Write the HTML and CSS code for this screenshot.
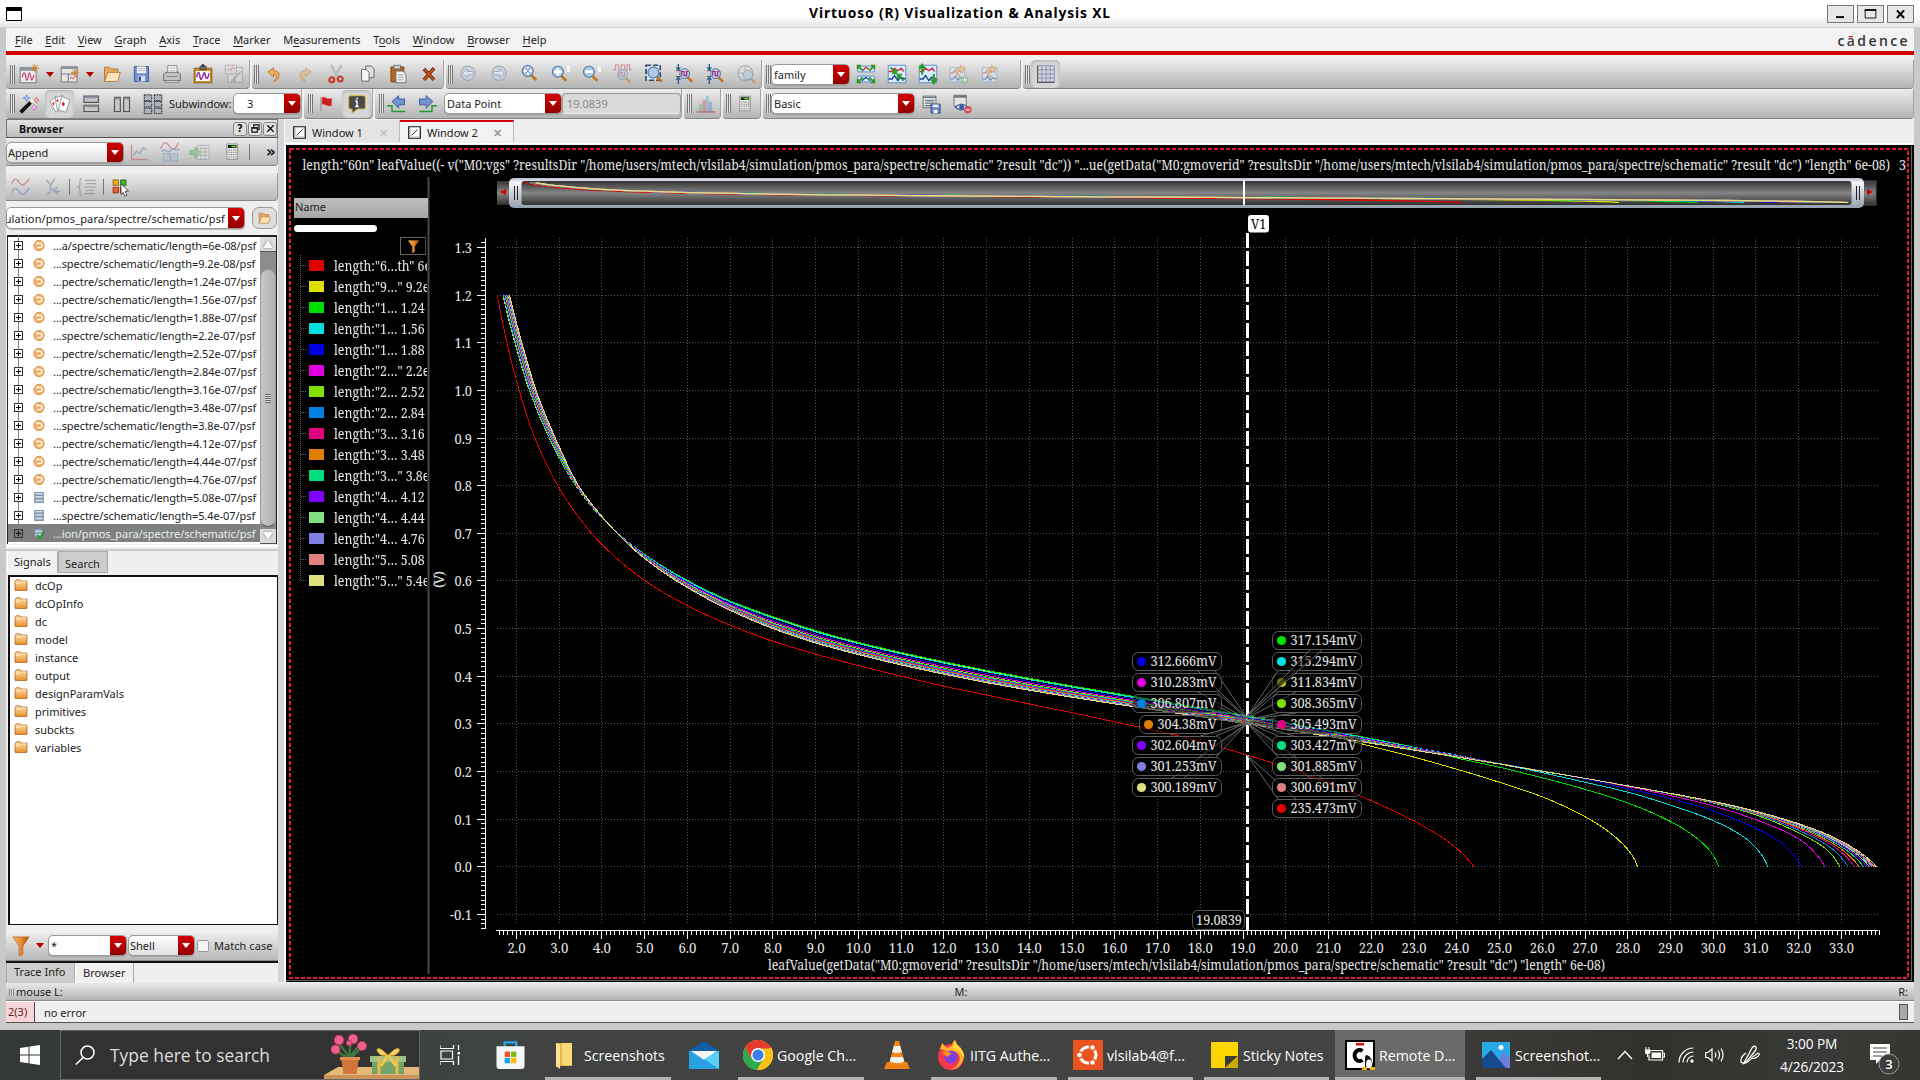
FILE: index.html
```html
<!DOCTYPE html>
<html lang="en">
<head>
<meta charset="utf-8">
<title>Virtuoso (R) Visualization &amp; Analysis XL</title>
<link rel="stylesheet" href="styles.css">
</head>
<body>
<svg class="defs" width="0" height="0">
  <defs>
    <linearGradient id="gOrange" x1="0" y1="0" x2="0" y2="1"><stop offset="0" stop-color="#ffe0b0"/><stop offset="1" stop-color="#e8912c"/></linearGradient>
    <linearGradient id="gFunnel" x1="0" y1="0" x2="1" y2="0"><stop offset="0" stop-color="#ffb870"/><stop offset=".5" stop-color="#e88a30"/><stop offset="1" stop-color="#a85210"/></linearGradient>
    <linearGradient id="gBar" x1="0" y1="0" x2="0" y2="1"><stop offset="0" stop-color="#333"/><stop offset=".5" stop-color="#858585"/><stop offset="1" stop-color="#303030"/></linearGradient>
    <linearGradient id="gFrame" x1="0" y1="0" x2="0" y2="1"><stop offset="0" stop-color="#b8bcc8"/><stop offset=".15" stop-color="#f4f5fa"/><stop offset="1" stop-color="#939fac"/></linearGradient>
    <symbol id="folder" viewBox="0 0 16 14"><path d="M1 3V13.3H15V2.5H8L7 1H2.500Z" fill="url(#gOrange)" stroke="#b5661a"/><path d="M2 5H7L8.500 3.500H14" stroke="#fff0d8" fill="none"/></symbol>
    <symbol id="openfolder" viewBox="0 0 24 24"><path d="M3 21V4H9L11 6H19V10" fill="#e9a860" stroke="#b5702c"/><path d="M3 21L7 10H22L19 21Z" fill="#fbe3b8" stroke="#b5702c"/></symbol>
    <symbol id="orb" viewBox="0 0 14 14"><circle cx="7" cy="7" r="6" fill="#f3b069" stroke="#d98a3c"/><path d="M5 4.500H8A2.300 2.300 0 0 1 8 9.500H5" fill="none" stroke="#fff" stroke-width="1.400"/><path d="M3 4.500L5.500 2.800V6.200Z" fill="#fff"/></symbol>
    <symbol id="db" viewBox="0 0 14 14"><path d="M2 1H12V13H2Z" fill="#a8bccf" stroke="#6d8298"/><path d="M3 2.500H11M3 6H11M3 10H11" stroke="#e4edf5"/><path d="M2 4.500H12M2 8.500H12" stroke="#6d8298"/></symbol>
    <symbol id="dbok" viewBox="0 0 14 14"><path d="M2 1H11V12H2Z" fill="#93a5b5" stroke="#66798c"/><path d="M2 4.500H11M2 8.500H11" stroke="#dbe5ee"/><path d="M5 9L8 12.500L13.500 4.500" fill="none" stroke="#249a34" stroke-width="2.400"/></symbol>
    <symbol id="funnel" viewBox="0 0 20 22"><path d="M1 1H19L12 11V20L8 22V11Z" fill="url(#gFunnel)" stroke="#b06420" stroke-width=".8"/></symbol>
    <symbol id="calc" viewBox="0 0 24 24"><path d="M4.500 1.500H19.500V22.500H4.500Z" fill="#e4e6e2" stroke="#777"/><path d="M6 3H18V7H6Z" fill="#222"/><path d="M11 4H17V6H11Z" fill="#4ee020"/><path d="M7 10H18M7 13H18M7 16H18M7 19.500H18" stroke="#666" stroke-width="1.300" stroke-dasharray="1.500 1.600"/></symbol>
    <symbol id="wavewin" viewBox="0 0 24 24"><path d="M1.500 4.500H20.500V22.500H1.500Z" fill="#ececec" stroke="#666"/><path d="M1 4H21V8H1Z" fill="#8a959e"/><path d="M4 16C5 9 7 9 8 15S10 21 11 15S13 9 14 15S16 20 18 13" fill="none" stroke="#c2486a" stroke-width="1.500"/></symbol>
    <symbol id="spark" viewBox="0 0 10 10"><path d="M5 0V10M0 5H10M1.500 1.500L8.500 8.500M8.500 1.500L1.500 8.500" stroke="#d9781c" stroke-width="1.100"/></symbol>
    <symbol id="mag" viewBox="0 0 24 24"><path d="M13 14L21 22" stroke="#c8701c" stroke-width="3.600"/><circle cx="9.500" cy="9.500" r="7.500" fill="#aecbe8" stroke="#52779c" stroke-width="1.500"/></symbol>
    <symbol id="plotwin" viewBox="0 0 14 14"><path d="M.8.800H13.200V13.200H.8Z" fill="#fff" stroke="#111" stroke-width="1.300"/><path d="M4 10L10 4" stroke="#111"/><path d="M2.800 2V11.500H12" fill="none" stroke="#aaa" stroke-width=".6"/></symbol>
    <symbol id="undo" viewBox="0 0 24 24"><path d="M3 9L11 3V7C18 7 21 12 18 17C17 20 14 22 11 22C16 18 17 12 11 12V16Z" fill="#f3ac5a" stroke="#b76618"/></symbol>
    <symbol id="traceplot" viewBox="0 0 24 24"><path d="M1.500 1.500H22.500V22.500H1.500Z" fill="#d9ecff" stroke="#4a83bf"/><path d="M2 9H6L9 5L13 8L17 5L20 9" fill="none" stroke="#d42a35" stroke-width="1.600"/><path d="M2 18H6L9 14L13 20L16 16L22 18" fill="none" stroke="#16448c" stroke-width="1.600"/></symbol>
  </defs>
</svg>

<div class="desktop">
  <header class="titlebar">
    <svg class="sysicon" viewBox="0 0 16 14"><path d="M.5.500H15.500V13.500H.5Z" fill="#fff" stroke="#000"/><path d="M0 0H16V4H0Z"/></svg>
    <h1>Virtuoso (R) Visualization &amp; Analysis XL</h1>
    <div class="winbtns">
      <span><svg viewBox="0 0 26 18"><path d="M8 12.500H17" stroke="#000" stroke-width="2.200"/></svg></span>
      <span><svg viewBox="0 0 26 18"><path d="M7 4.500H19V13.500H7Z" fill="none" stroke="#000" /><path d="M6.500 4.500H19.500" stroke="#000" stroke-width="2"/></svg></span>
      <span><svg viewBox="0 0 26 18"><path d="M9 5L17 13.500M17 5L9 13.500" stroke="#000" stroke-width="2.200"/></svg></span>
    </div>
  </header>

  <div class="app">
    <nav class="menubar">
      <span><u>F</u>ile</span><span><u>E</u>dit</span><span><u>V</u>iew</span><span><u>G</u>raph</span><span><u>A</u>xis</span><span><u>T</u>race</span><span><u>M</u>arker</span><span>M<u>e</u>asurements</span><span>T<u>o</u>ols</span><span><u>W</u>indow</span><span><u>B</u>rowser</span><span><u>H</u>elp</span>
      <b class="brand">c<span>ā</span>dence</b>
    </nav>

    <div class="toolbar">
      <div class="grp ga">
        <i class="grip"></i>
        <span class="ic w28"><svg viewBox="0 0 24 24"><use href="#wavewin"/><use href="#spark" x="14" y="0" width="10" height="10"/></svg></span>
        <span class="tri w14"></span>
        <span class="ic w25"><svg viewBox="0 0 24 24"><path d="M1.500 3.500H20.500V21.500H1.500ZM1.500 12H20M10 12V21" fill="#e6e6e6" stroke="#666"/><path d="M1 3H21V6H1Z" fill="#8a959e"/><path d="M12 18C14 12 15 22 17 16S19 18 20 15" fill="none" stroke="#c2284a"/><use href="#spark" x="13" y="5" width="10" height="10"/></svg></span>
        <span class="tri w16"></span>
        <span class="ic w27"><svg viewBox="0 0 24 24"><use href="#openfolder"/></svg></span>
        <span class="ic"><svg viewBox="0 0 24 24"><path d="M4 3H21V21H4Z" fill="#6d8fd0" stroke="#2f4f96"/><path d="M7 3H18V11H7Z" fill="#f4f4f4"/><path d="M8 5.500H17M8 8H17" stroke="#aaa"/><path d="M8 14H17V21H8Z" fill="#dde"/><path d="M9 15H12V20H9Z" fill="#2f4f96"/></svg></span>
        <span class="ic"><svg viewBox="0 0 24 24"><path d="M7 11V2H18V11" fill="#fff" stroke="#777"/><path d="M9 5H16M9 8H16" stroke="#999"/><path d="M2 12L5 10H20L22 12V20H2Z" fill="#c4c4c0" stroke="#666"/><path d="M4 20H20V22H4ZM5 15H19" fill="#eee" stroke="#777"/></svg></span>
        <span class="ic"><svg viewBox="0 0 26 26"><path d="M1.500 5.500H24.500V24.500H1.500Z" fill="#c98b22" stroke="#75500c"/><path d="M4 9H22V22H4Z" fill="#fff"/><path d="M9 3H17V7H9Z" fill="#777" stroke="#333"/><circle cx="13" cy="2" r="2" fill="#333"/><path d="M5 17C6 9 8 9 9 16S11 20 13 15S15 9 16 15S19 20 21 12" fill="none" stroke="#9324a8" stroke-width="1.800"/></svg></span>
        <span class="ic dim"><svg viewBox="0 0 24 24"><path d="M1.500 1.500H15V12H1.500ZM4.500 12V22H22V4H15" fill="#ddd" stroke="#777"/><path d="M4 8C6 2 7 12 9 6S12 9 13 5" fill="none" stroke="#c2284a"/><path d="M9 21L20 9M13 14V22" stroke="#888" stroke-width="2"/></svg></span>
      </div>
      <div class="grp gb">
        <i class="grip"></i>
        <span class="ic"><svg viewBox="0 0 24 24"><use href="#undo" transform="translate(2 2) scale(.85)"/></svg></span>
        <span class="ic faint"><svg viewBox="0 0 24 24"><use href="#undo" transform="translate(22 2) scale(-.85 .85)"/></svg></span>
        <span class="ic"><svg viewBox="0 0 24 24"><path d="M6 1L15 17M19 1L9 17" stroke="#b9bec4" stroke-width="3"/><circle cx="7" cy="19" r="3" fill="none" stroke="#c93a28" stroke-width="2.600"/><circle cx="17" cy="18" r="3" fill="none" stroke="#c93a28" stroke-width="2.600"/></svg></span>
        <span class="ic"><svg viewBox="0 0 24 24"><path d="M10.500 2.500H17L20.500 6V16.500H10.500Z" fill="#ddd" stroke="#555"/><path d="M5.500 6.500H11L14.500 10V20.500H5.500Z" fill="#f6f6f6" stroke="#555"/></svg></span>
        <span class="ic"><svg viewBox="0 0 24 24"><path d="M3.500 3.500H19V21.500H3.500Z" fill="#b5651c" stroke="#6e3a0c"/><path d="M7 1.500H15V6H7Z" fill="#ccc" stroke="#666"/><path d="M9.500 8.500H18L21.500 12V22.500H9.500Z" fill="#eee" stroke="#666"/><path d="M12 13H19M12 16H19M12 19H19" stroke="#999"/></svg></span>
        <span class="ic"><svg viewBox="0 0 24 24"><path d="M6 6L18 19M18 5L6 19" stroke="#5e260a" stroke-width="4.200"/><path d="M6 6L18 19M18 5L6 19" stroke="#d0531a" stroke-width="2.200"/></svg></span>
      </div>
      <div class="grp gc">
        <i class="grip"></i>
        <span class="ic soft"><svg viewBox="0 0 24 24"><circle cx="12" cy="11" r="8.500" fill="#ccd3dc" stroke="#98a4b4" stroke-width="1.500"/><path d="M5.500 11L11 6V9H18V13H11V16Z" fill="#e6edf6" stroke="#8298b8"/></svg></span>
        <span class="ic soft"><svg viewBox="0 0 24 24"><circle cx="12" cy="11" r="8.500" fill="#ccd3dc" stroke="#98a4b4" stroke-width="1.500"/><path d="M18.500 11L13 6V9H6V13H13V16Z" fill="#e6edf6" stroke="#8298b8"/></svg></span>
        <span class="ic"><svg viewBox="0 0 24 24"><use href="#mag" x="1" width="21" height="21"/><path d="M9.300 3.500V13M4.500 8.300H14" stroke="#fff" stroke-width="2.600"/><path d="M7.500 5L11.500 11M11.500 5L7.500 11" stroke="#4b77a5"/></svg></span>
        <span class="ic"><svg viewBox="0 0 24 24"><use href="#mag" y="1" width="21" height="21"/><path d="M8.300 5V14M4 9.300H13" stroke="#fff" stroke-width="3"/><path d="M19 3H22V5H20V7H22V9H19" fill="none" stroke="#fff" stroke-width="1.300"/></svg></span>
        <span class="ic"><svg viewBox="0 0 24 24"><use href="#mag" y="1" width="21" height="21"/><path d="M4 9.300H13" stroke="#fff" stroke-width="3"/><path d="M19 3H22V5H20V7H22V9H19" fill="none" stroke="#fff" stroke-width="1.300"/></svg></span>
        <span class="ic dim"><svg viewBox="0 0 24 24"><path d="M0 7H3V1H7V7H10V1H14V7H17V1H20V7H23" fill="none" stroke="#c45560" stroke-width="1.500"/><use href="#mag" x="4" y="5" width="19" height="19"/><path d="M8 15V10H11V15H14V10" fill="none" stroke="#c4457a" stroke-width="1.300"/></svg></span>
        <span class="ic"><svg viewBox="0 0 24 24"><path d="M2.500 1.500H19.500V19.500H2.500Z" fill="#cfe1f2" stroke="#35495e" stroke-width="2" stroke-dasharray="6 2.500"/><use href="#mag" x="3" y="2" width="21" height="21"/></svg></span>
        <span class="ic"><svg viewBox="0 0 24 24"><use href="#mag" x="4" y="4" width="19" height="19"/><path d="M4 0V6M1.500 4L4 7L6.500 4M4 24V17M1.500 19L4 16L6.500 19" stroke="#2a5e9a" stroke-width="1.700" fill="none"/><path d="M1 8H6M1 15H6" stroke="#444"/><path d="M8 14V9H11V14H14V9H16" fill="none" stroke="#b01a78" stroke-width="1.300"/></svg></span>
        <span class="ic"><svg viewBox="0 0 24 24"><use href="#mag" x="4" y="4" width="19" height="19"/><path d="M4 0V6M1.500 4L4 7L6.500 4M4 24V17M1.500 19L4 16L6.500 19" stroke="#2a5e9a" stroke-width="1.700" fill="none"/><path d="M1 8H6M1 15H6" stroke="#444"/><path d="M8 14V9H11V14H14V9H16" fill="none" stroke="#b01a78" stroke-width="1.300"/></svg></span>
        <span class="ic dim"><svg viewBox="0 0 24 24"><circle cx="10" cy="11" r="9" fill="#ddd" stroke="#888" stroke-width="1.500"/><path d="M10 1V21M1 11H19" stroke="#888"/><use href="#mag" x="6" y="6" width="18" height="18"/></svg></span>
      </div>
      <div class="grp gd">
        <i class="grip"></i>
        <span class="combo c78">family<i></i></span>
        <span class="ic"><svg viewBox="0 0 24 24"><path d="M2 2.500H22V9.500H2ZM2 14.500H22V21.500H2Z" fill="#d9ecff" stroke="#4a83bf"/><path d="M8 8L12 4L16 7" fill="none" stroke="#d42a35" stroke-width="1.600"/><path d="M7 20L12 16L17 20" fill="none" stroke="#16448c" stroke-width="1.600"/><path d="M8 8L2 2M2 6V2H6M16 8L22 2M18 2H22V6M8 16L2 22M2 18V22H6M16 16L22 22M18 22H22V18" fill="none" stroke="#2c9a22" stroke-width="2.200"/></svg></span>
        <span class="ic"><svg viewBox="0 0 24 24"><use href="#traceplot"/><path d="M4 4L11 11M11 6V11H6M20 20L13 13M13 18V13H18" fill="none" stroke="#2c9a22" stroke-width="2.400"/></svg></span>
        <span class="ic"><svg viewBox="0 0 24 24"><use href="#traceplot"/><path d="M5 13V2M1.500 6L5 1L8.500 6M19 12V23M15.500 18L19 23L22.500 18" fill="none" stroke="#2c9a22" stroke-width="2.400"/></svg></span>
        <span class="ic faint"><svg viewBox="0 0 24 24"><use href="#traceplot" y="3" width="20" height="20"/><use href="#undo" transform="translate(22 -1) scale(-.75 .75)"/><circle cx="19" cy="19" r="4.500" fill="#5fba5f"/><path d="M16 19H22M19 16V22" stroke="#fff" stroke-width="1.500"/></svg></span>
        <span class="ic faint"><svg viewBox="0 0 24 24"><use href="#traceplot" y="3" x="1" width="21" height="20"/><use href="#undo" transform="translate(22 -1) scale(-.75 .75)"/></svg></span>
      </div>
      <div class="grp ge">
        <i class="grip"></i>
        <span class="ic on"><svg viewBox="0 0 24 24"><path d="M2 2V22H22M2 2H22V22M7 2V22M12 2V22M17 2V22M2 7H22M2 12H22M2 17H22" fill="none" stroke="#7f86b8"/><path d="M2 2V22H22" fill="none" stroke="#555" stroke-width="1.300"/></svg></span>
      </div>
    </div>

    <div class="toolbar second">
      <div class="grp ha">
        <i class="grip"></i>
        <span class="ic"><svg viewBox="0 0 24 24"><path d="M2 22L15 9" stroke="#111" stroke-width="4.500"/><path d="M14 10L17 7" stroke="#eee" stroke-width="4.500"/><path d="M9 1L10 4L13 4.500L10 6L9 9L8 6L5 4.500L8 4Z" fill="#c8dcff" stroke="#3a6de0" stroke-width=".8"/><path d="M21 4L22 7L24 7.500L22 9L21 11L20 9L18 7.500L20 7Z" fill="#ffd0d0" stroke="#e04040" stroke-width=".8"/><path d="M18 13L19 15L22 16L19 17L18 20L17 17L15 16L17 15Z" fill="#ffd0ff" stroke="#c060c8" stroke-width=".8"/></svg></span>
        <span class="ic on"><svg viewBox="0 0 26 24"><path d="M1 9L8 3L14 17L8 22Z" fill="#fff" stroke="#888"/><path d="M7 4L16 2L19 17L10 20Z" fill="#fff" stroke="#888"/><path d="M15 3L25 7L20 22L11 19Z" fill="#fff" stroke="#888"/><path d="M17 9L19 12L17 15L15 12ZM10 6L11.500 8L10 10L8.500 8ZM5 9L6.500 11.500L5 14L4 12Z" fill="#d8202c"/></svg></span>
        <span class="ic"><svg viewBox="0 0 24 24"><path d="M3.500 2.500H21V10H3.500ZM3.500 13.500H21V21H3.500Z" fill="#c8c8c8" stroke="#555" stroke-width="1.400"/><path d="M3 4H21M3 15H21" stroke="#8894a0" stroke-width="2"/></svg></span>
        <span class="ic"><svg viewBox="0 0 24 24"><path d="M3 4H10V21H3ZM14 4H21V21H14Z" fill="#c8c8c8" stroke="#555" stroke-width="1.400"/><path d="M3 5.500H10M14 5.500H21" stroke="#8894a0" stroke-width="2"/></svg></span>
        <span class="ic"><svg viewBox="0 0 24 24"><path d="M1.500 1H10.500V8H1.500ZM13.500 1H22.500V8H13.500ZM1.500 9H10.500V15.500H1.500ZM13.500 9H22.500V15.500H13.500ZM1.500 17H10.500V23.500H1.500ZM13.500 17H22.500V23.500H13.500Z" fill="#a9b4be" stroke="#222" stroke-width="1.200" stroke-dasharray="2 1"/></svg></span>
        <label>Subwindow:</label>
        <span class="combo c68 num">3<i></i></span>
      </div>
      <div class="grp hb">
        <i class="grip"></i>
        <span class="ic"><svg viewBox="0 0 24 24"><path d="M6 4V21" stroke="#999" stroke-width="1.600"/><path d="M7 4C11 2 12 7 19 5V14C12 16 11 11 7 13Z" fill="#c82020" stroke="#f09090" stroke-width=".6"/></svg></span>
        <span class="ic on"><svg viewBox="0 0 24 24"><path d="M4 2H20Q22 2 22 4V16Q22 18 20 18H13L6 23V18H4Q2 18 2 16V4Q2 2 4 2Z" fill="#4a4a4a" stroke="#d8bc40" stroke-width="1.200"/><path d="M12 8V15M10 15H14M10 8.500H12M12 4.500V6.500" stroke="#fff" stroke-width="1.800"/></svg></span>
      </div>
      <div class="grp hc">
        <i class="grip"></i>
        <span class="ic"><svg viewBox="0 0 24 24"><path d="M6 9L14 2V6H21V13H14V17Z" fill="#7394cf" stroke="#2f4f96"/><path d="M0 14H6V21H22" fill="none" stroke="#1e9a2e" stroke-width="1.700"/></svg></span>
        <span class="ic"><svg viewBox="0 0 24 24"><path d="M19 9L11 2V6H3V13H11V17Z" fill="#7394cf" stroke="#2f4f96"/><path d="M3 21H18V14H24" fill="none" stroke="#1e9a2e" stroke-width="1.700"/></svg></span>
        <span class="combo c118">Data Point<i></i></span>
        <span class="field">19.0839</span>
      </div>
      <div class="grp hd">
        <i class="grip"></i>
        <span class="ic dim"><svg viewBox="0 0 24 24"><path d="M4 21V12H8V21Z" fill="#66c070"/><path d="M8 21V7H12V21Z" fill="#e06070"/><path d="M12 21V2H15V21Z" fill="#50b8b8"/><path d="M15 21V9H19V21Z" fill="#7080d8"/><path d="M1 21.500H23" stroke="#a83040" stroke-width="2"/></svg></span>
      </div>
      <div class="grp he">
        <i class="grip"></i>
        <span class="ic"><svg viewBox="0 0 24 24"><use href="#calc" x="2" y="1" width="20" height="21"/></svg></span>
      </div>
      <div class="grp hf">
        <i class="grip"></i>
        <span class="combo c144">Basic<i></i></span>
        <span class="ic"><svg viewBox="0 0 24 24"><path d="M2.500 2.500H18V16.500H2.500Z" fill="#ddd" stroke="#666"/><path d="M2 4H18M5 8H16M5 11H16M5 14H12" stroke="#6c7a88" stroke-width="1.600"/><path d="M12 12H23V23H12Z" fill="#6d80c0" stroke="#334a88"/><path d="M14 12.500H21V16H14ZM15 19H20V23H15Z" fill="#eee"/></svg></span>
        <span class="ic"><svg viewBox="0 0 24 24"><path d="M2.500 1.500H17V14.500H2.500Z" fill="#e6e6e6" stroke="#666"/><path d="M2 3H18" stroke="#6c7a88" stroke-width="3"/><path d="M4 16Q11 8 19 16Q11 22 4 16Z" fill="#eaf0ff" stroke="#3a5fa0" stroke-width="1.500"/><circle cx="11.500" cy="15.500" r="3" fill="#3a5fa0"/><circle cx="19" cy="19" r="4.500" fill="#d84a50"/><path d="M16.500 19H21.500" stroke="#fff" stroke-width="1.600"/></svg></span>
      </div>
    </div>

    <div class="body">
      <aside class="dock">
        <div class="dockhead"><b>Browser</b><span>?</span><span><svg viewBox="0 0 10 10"><path d="M3 3V1H9V6H7M1 4H7V9H1ZM1 4.500H7" fill="none" stroke="#111" stroke-width="1.300"/></svg></span><span><svg viewBox="0 0 10 10"><path d="M1.500 1.500L8.500 8.500M8.500 1.500L1.500 8.500" stroke="#111" stroke-width="1.500"/></svg></span></div>
        <div class="strip s1">
          <span class="combo c118 grey">Append<i></i></span>
          <span class="ic dim"><svg viewBox="0 0 24 24"><path d="M3 3V21H22" fill="none" stroke="#c85050" stroke-width="1.600"/><path d="M5 16L9 11L13 14L17 7L21 9" fill="none" stroke="#5878b8" stroke-width="1.600"/></svg></span>
          <span class="ic dim"><svg viewBox="0 0 24 24"><path d="M1 8C5-3 8 0 12 6S19 8 22 1" fill="none" stroke="#c04040" stroke-width="1.500"/><path d="M2 12C6 5 9 16 13 10S19 14 23 8" fill="none" stroke="#4878b0" stroke-width="1.500"/><path d="M4 14H12V23H4ZM13 14H21V23H13Z" fill="#a9bfd4" stroke="#6a86a4"/></svg></span>
          <span class="ic dim"><svg viewBox="0 0 24 24"><path d="M8.500 4H23V21H8.500ZM8.500 8H23M8.500 12H23M8.500 16H23M13 4V21M18 4V21" fill="#e6e6e6" stroke="#888"/><path d="M0 10H6V6L12 12.500L6 19V15H0Z" fill="#66b878" stroke="#2e8a44"/></svg></span>
          <span class="ic"><svg viewBox="0 0 24 24"><use href="#calc" x="3" y="1" width="21" height="21"/></svg></span>
          <i class="vsep"></i><span class="more">»</span>
        </div>
        <div class="strip s2">
          <span class="ic dim"><svg viewBox="0 0 24 24"><path d="M1 8C5-2 8 4 11 8S18 8 22 2" fill="none" stroke="#c04040" stroke-width="1.500"/><path d="M1 19C5 9 8 15 11 19S18 20 22 13" fill="none" stroke="#4878b0" stroke-width="1.500"/></svg></span>
          <span class="ic dim"><svg viewBox="0 0 24 24"><path d="M4 3L9 10M14 2L9 10V18L5 21M9 13L14 17L20 17M17 12L13 17L19 21" fill="none" stroke="#7088a8" stroke-width="2"/></svg></span>
          <i class="vsep"></i>
          <span class="ic dim"><svg viewBox="0 0 24 24"><path d="M6 2Q3 2 3.500 7Q4 11 1 12Q4 13 3.500 17Q3 22 6 22" fill="none" stroke="#777" stroke-width="1.500"/><path d="M9 4H23M11 8H23M9 12H23M11 16H20M9 20H21" stroke="#777" stroke-width="1.400"/></svg></span>
          <i class="vsep"></i>
          <span class="ic"><svg viewBox="0 0 24 24"><path d="M2.500 3.500H9V10H2.500Z" fill="#e8b020" stroke="#8a5a10"/><path d="M11.500 3.500H18V10H11.500Z" fill="#48b038" stroke="#1e6a18"/><path d="M2.500 12.500H9V19H2.500Z" fill="#e86030" stroke="#8a2a10"/><path d="M11.500 12.500H15V19H11.500Z" fill="#d83030" stroke="#8a1010"/><path d="M12 8L21 17H17L19 22L16.500 23L14.500 18.500L12 21Z" fill="#fff" stroke="#333"/></svg></span>
        </div>
        <div class="pathrow">
          <span class="combo path"><em>nulation/pmos_para/spectre/schematic/psf</em><i></i></span>
          <span class="fbtn"><svg viewBox="0 0 24 24"><use href="#openfolder"/></svg></span>
        </div>
        <div class="tree">
          <div class="rows" id="tree"></div>
          <div class="sbar"><span class="sb up"></span><span class="track"></span><span class="thumb"></span><span class="sb dn"></span></div>
        </div>
        <div class="split"></div>
        <div class="tabs top"><span class="cur">Signals</span><span>Search</span></div>
        <div class="signals" id="signals"></div>
        <div class="filter">
          <svg class="fun" viewBox="0 0 20 22"><use href="#funnel"/></svg>
          <span class="tri w14"></span>
          <span class="combo c79">*<i></i></span>
          <span class="combo c67 grey">Shell<i></i></span>
          <span class="chk"></span>
          <span class="mc">Match case</span>
        </div>
        <div class="tabs bottom"><span>Trace Info</span><span class="cur">Browser</span></div>
      </aside>

      <main class="work">
        <div class="wtabs">
          <span><svg viewBox="0 0 14 14"><use href="#plotwin"/></svg>Window 1<em>✕</em></span>
          <span class="cur"><svg viewBox="0 0 14 14"><use href="#plotwin"/></svg>Window 2<em>✕</em></span>
        </div>
        <div class="canvas">
          <svg id="plot" class="plot" viewBox="286 145 1626 838" width="1626" height="838"></svg>
          <div class="legend">
            <div class="lhead">Name</div>
            <div class="pill"></div>
            <div class="lfun"><svg viewBox="0 0 20 22"><use href="#funnel"/></svg></div>
            <div class="lrows" id="legend"></div>
          </div>
        </div>
      </main>
    </div>

    <div class="mouse"><span><i></i>mouse L:</span><span>M:</span><span>R:</span></div>
    <div class="err"><span class="code">2(3)</span><span class="msg">no error</span><i></i></div>
  </div>

  <footer class="taskbar">
    <div class="start"><svg viewBox="0 0 20 20"><path d="M0 3L8.500 1.700V9.500H0ZM9.500 1.500L20 0V9.500H9.500ZM0 10.500H8.500V18.300L0 17ZM9.500 10.500H20V20L9.500 18.500Z" fill="#fff"/></svg></div>
    <div class="search">
      <svg class="glass" viewBox="0 0 20 20"><circle cx="12.500" cy="7.500" r="6.500" fill="none" stroke="#fff" stroke-width="1.500"/><path d="M8 12.500L.8 19.500" stroke="#fff" stroke-width="1.500"/></svg>
      <span>Type here to search</span>
      <svg class="gift" viewBox="0 0 95 48">
        <path d="M0 44L14 36H95V48H0Z" fill="#e4b878"/><path d="M0 44H95V48H0Z" fill="#c9935a"/>
        <path d="M25 27Q20 18 15 13M25 27Q26 16 27 10M25 27Q32 18 36 14M22 26Q12 20 12 18M28 26Q34 20 36 18" stroke="#3f7a3a" stroke-width="2.200" fill="none"/>
        <path d="M17 27H35L32.500 43H19.500Z" fill="#d0763a"/><path d="M16 26H36V29H16Z" fill="#e59050"/>
        <g fill="#f0608c" stroke="#b8335c" stroke-width="1"><circle cx="15" cy="9" r="4.800"/><circle cx="29" cy="8" r="4.800"/><circle cx="11.500" cy="18.500" r="4.500"/><circle cx="38" cy="15" r="4.600"/><circle cx="25" cy="12" r="2.600"/></g>
        <path d="M46 25H82V31H46Z" fill="#9cc088"/><path d="M48 31H80V43H48Z" fill="#74a468"/><path d="M55 25V43M73 25V43" stroke="#e8bc48" stroke-width="3"/>
        <path d="M64 25C54 12 49 19 57 24ZM64 25C74 12 80 19 71 24Z" fill="#f6d468" stroke="#c99a30"/><path d="M64 24L57 35M64 24L72 35" stroke="#f0c850" stroke-width="3"/>
      </svg>
    </div>
    <div class="ti tview"><svg viewBox="0 0 20 20"><path d="M0 0V3.500H13.500V0M0 20V16.500H13.500V20M1 6V14H12.500V6Z" fill="none" stroke="#fff" stroke-width="1.200"/><path d="M18.500 0V5M18.500 11V20" stroke="#fff" stroke-width="1.300"/><path d="M17.500 7H20V9.500H17.500Z" fill="#fff"/></svg></div>
    <div class="ti store"><svg viewBox="0 0 30 30"><path d="M9 7V2H21V7" fill="none" stroke="#2aa9e8" stroke-width="2.400"/><path d="M.5 6H29.500V26Q29.500 29.500 26 29.500H4Q.5 29.500 .5 26Z" fill="#f4f6f8"/><path d="M9 11.500H14.500V17H9Z" fill="#f25022"/><path d="M15.500 11.500H21V17H15.500Z" fill="#7fba00"/><path d="M9 18H14.500V23.500H9Z" fill="#00a4ef"/><path d="M15.500 18H21V23.500H15.500Z" fill="#ffb900"/></svg></div>
    <div class="ti app t1"><svg viewBox="0 0 30 30"><path d="M6 3H17L22 5V26H11L6 27Z" fill="#e8b850"/><path d="M6 3L10 5V29L6 26Z" fill="#fbe08e"/><path d="M12 3H22V25H12Z" fill="#f9d978"/></svg><span>Screenshots</span></div>
    <div class="ti mail"><svg viewBox="0 0 30 30"><path d="M0 11L15 1L30 11Z" fill="#0f5fa8"/><path d="M0 11H30V29H0Z" fill="#2b9fe0"/><path d="M2 11H28L15 20Z" fill="#f4f4f4"/><path d="M30 11V29L15 19Z" fill="#5ad0f6"/><path d="M0 11L30 29H0Z" fill="#29a0e2"/></svg></div>
    <div class="ti app t2"><svg viewBox="0 0 30 30"><circle cx="15" cy="15" r="15" fill="#fbc116"/><path d="M15 15L28 7.500A15 15 0 0 0 2 7.500L8.500 19Z" fill="#e33b2e"/><path d="M2 7.500A15 15 0 0 0 14 30L21 19L15 15L8.500 18.700Z" fill="#2da94f"/><path d="M15 8.500H28.600A15 15 0 0 1 14 30L20.500 18.500Z" fill="#fbc116"/><circle cx="15" cy="15" r="7" fill="#fff"/><circle cx="15" cy="15" r="5.500" fill="#3b7ded"/></svg><span>Google Ch...</span></div>
    <div class="ti vlc"><svg viewBox="0 0 26 30"><path d="M3 22H23L26 29H0Z" fill="#f08010"/><path d="M11 1H15L21 24Q13 28 5 24Z" fill="#f4861c"/><path d="M9.800 6H16.200L17.800 12Q13 14 8.200 12ZM7 17H19L20.300 21.500Q13 25 5.700 21.500Z" fill="#f2f2f2"/></svg></div>
    <div class="ti app t3"><svg viewBox="0 0 30 30"><circle cx="15" cy="17" r="13" fill="#f4384e"/><path d="M4 9L6 3L11 8C14 6 16 6 16 6Q16 2 19 0Q20 4 24 7Q29 13 27 20Q24 29 14 30Q23 27 24 18Q22 10 14 12Z" fill="#ffb224"/><path d="M19 0Q20 5 24 8Q29 13 28 18Q24 9 17 8Z" fill="#ffdc40"/><circle cx="15" cy="17" r="6.500" fill="#7c3fe0"/><path d="M6 12Q12 10 16 14Q12 15 12 17Q8 16 6 12Z" fill="#ff8a1e"/></svg><span>IITG Authe...</span></div>
    <div class="ti app t4"><svg viewBox="0 0 30 30"><path d="M0 0H30V30H0Z" fill="#e95420"/><circle cx="15" cy="15" r="8" fill="none" stroke="#fff" stroke-width="3"/><circle cx="6.500" cy="15" r="3" fill="#fff" stroke="#e95420" stroke-width="1.400"/><circle cx="19.500" cy="7.500" r="3" fill="#fff" stroke="#e95420" stroke-width="1.400"/><circle cx="19.500" cy="22.500" r="3" fill="#fff" stroke="#e95420" stroke-width="1.400"/></svg><span>vlsilab4@f...</span></div>
    <div class="ti app t5"><svg viewBox="0 0 30 30"><path d="M2 3Q2 2 3 2H28Q29 2 29 3V28H3Q2 28 2 27Z" fill="#fdd500"/><path d="M16 16H29L16 28Z" fill="#3c3c34"/><path d="M29 16V28H16Z" fill="#cfa900"/></svg><span>Sticky Notes</span></div>
    <div class="ti app t6"><svg viewBox="0 0 30 30"><path d="M1 1H29V29H1Z" fill="#fff" stroke="#000" stroke-width="2"/><path d="M11 3H19V5.500H11Z" fill="#e01020"/><path d="M17.500 11A5 5.500 0 1 0 17.500 20" fill="none" stroke="#000" stroke-width="4"/><path d="M20 28V18Q20 15 22 15Q27 16 28.500 28Z" fill="#111"/><ellipse cx="24" cy="24" rx="3" ry="4.500" fill="#fff"/><path d="M17 27H22V30H17ZM25 27H30V30H25Z" fill="#f0b020"/></svg><span>Remote D...</span></div>
    <div class="ti app t7"><svg viewBox="0 0 30 30"><path d="M1 2H29V28H1Z" fill="#29a8e8"/><path d="M14 28L22 12L29 19V28Z" fill="#6b7ddc"/><path d="M1 19L10 10L25 28H1Z" fill="#164a8c"/><circle cx="20" cy="7.500" r="2.500" fill="#fff"/></svg><span>Screenshot...</span></div>
    <div class="tray">
      <svg class="y1" viewBox="0 0 16 10"><path d="M1 9L8 1.500L15 9" fill="none" stroke="#fff" stroke-width="1.400"/></svg>
      <svg class="y2" viewBox="0 0 20 16"><path d="M5 3.500H17.500V13H4V8M17.500 6.500H19.500V10H17.500" fill="none" stroke="#fff" stroke-width="1.200"/><path d="M6.500 5.500H16V11H6.500Z" fill="#fff"/><path d="M0 3H5V5Q5 7 2.500 7Q0 7 0 5ZM1 0V3M4 0V3M2.500 7V10" stroke="#fff" fill="#fff"/></svg>
      <svg class="y3" viewBox="0 0 16 16"><path d="M1 15.500A14.500 14.500 0 0 1 15.500 1M5 15.500A10.500 10.500 0 0 1 15.500 5M9 15.500A6.500 6.500 0 0 1 15.500 9" fill="none" stroke="#fff" stroke-width="1.200"/><circle cx="14" cy="14" r="1.700" fill="#fff"/></svg>
      <svg class="y4" viewBox="0 0 20 16"><path d="M.7 5.500H3L7 2V14L3 10.500H.7Z" fill="none" stroke="#fff" stroke-width="1.200"/><path d="M10 5.500Q11.500 8 10 10.500M13 3.500Q16 8 13 12.500M16 1.500Q20 8 16 14.500" fill="none" stroke="#fff" stroke-width="1.200"/></svg>
      <svg class="y5" viewBox="0 0 20 20"><path d="M5 16L12 3Q14 0 16 2Q17 4 15 6L7 16L4 18Z" fill="none" stroke="#fff" stroke-width="1.300"/><path d="M6 8Q0 12 1 17Q4 20 9 16Q13 11 18 8Q21 9 17 12Q13 15 12 12" fill="none" stroke="#fff" stroke-width="1.200"/></svg>
      <div class="clock"><span>3:00 PM</span><span>4/26/2023</span></div>
      <svg class="y6" viewBox="0 0 32 32"><path d="M1 1H21V17H11L7 21V17H1Z" fill="#fff"/><path d="M4 5H18M4 9H18M4 13H13" stroke="#444" stroke-width="1.200"/><circle cx="20" cy="21" r="10" fill="#3c3c3a" stroke="#999"/><text x="20" y="26" font-size="13" text-anchor="middle" fill="#fff" font-weight="600">3</text></svg>
    </div>
  </footer>
</div>
<script src="app.js"></script>
</body>
</html>
```
FILE: styles.css
```css
* { box-sizing: border-box; }
body { margin: 0; background: #000; font-family: "Noto Sans", "Open Sans", sans-serif; font-size: 11px; color: #222; overflow: hidden; }
i, em { font-style: normal; }
.defs { position: absolute; }
.desktop { width: 1920px; height: 1080px; display: flex; flex-direction: column; background: #c9c9c9; }

.titlebar { height: 28px; display: flex; align-items: center; background: linear-gradient(#fff 60%, #e4e4e4); border-bottom: 1px solid #cfcfcf; padding: 0 6px; flex: none; }
.sysicon { width: 16px; height: 14px; }
.titlebar h1 { flex: 1; margin: 0; text-align: center; font: bold 13.8px "Noto Sans", sans-serif; color: #000; padding-left: 71px; line-height: 25px; letter-spacing: .87px; height: 27px; }
.winbtns { display: flex; gap: 3px; }
.winbtns span { width: 27px; height: 18px; border: 1px solid #777; background: #e6e6e6; display: flex; }
.winbtns svg { width: 25px; height: 16px; }

.app { margin: 0 6px; height: 995px; background: #efefef; display: flex; flex-direction: column; border-bottom: 1px solid #555; flex: none; }
.menubar { height: 27px; border-bottom: 4px solid #d00000; background: #f3f3f3; display: flex; align-items: center; padding-left: 9px; gap: 12.700px; flex: none; }
.menubar u { text-underline-offset: 2px; }
.brand { margin-left: auto; margin-right: 4px; font: 600 14px "Open Sans", sans-serif; letter-spacing: 2.400px; color: #333; position: relative; top: 1px; }
.brand span { background: linear-gradient(#e02020 38%, #333 38%); -webkit-background-clip: text; background-clip: text; color: transparent; }

.toolbar { display: flex; gap: 2px; height: 29px; margin-top: 5px; flex: none; }
.toolbar.second { margin-top: 0; height: 30px; }
.grp { display: flex; align-items: center; background: linear-gradient(#ececec, #b4b4b4); border-bottom: 1px solid #858585; border-right: 1px solid #a4a4a4; border-radius: 0 0 4px 3px; overflow: hidden; flex: none; }
.grip { width: 5px; height: 19px; margin: 0 0 0 4px; background: repeating-linear-gradient(90deg, #777 0 1px, #e6e6e6 1px 2px); flex: none; }
.ic { width: 31px; height: 28px; display: flex; align-items: center; justify-content: center; flex: none; }
.ic svg { width: 22px; height: 20px; overflow: visible; }
.ic.on { width: 29px; margin: 0 1px; background: #d6d6d6; border-radius: 5px; box-shadow: inset 0 1px 3px #aaa; }
.dim { opacity: .5; } .faint { opacity: .5; } .soft { opacity: .8; }
.w28 { width: 28px; } .w14 { width: 14px; } .w25 { width: 25px; } .w16 { width: 16px; } .w27 { width: 27px; }
.tri { display: flex; justify-content: center; flex: none; }
.tri::before { content: ""; border: 4px solid transparent; border-top: 5px solid #b80000; border-bottom: 0; }
.ga { width: 244px; } .gb { width: 192px; } .gc { width: 316px; } .gd { width: 257px; } .ge { flex: 1; }
.gb .grip, .gc .grip, .gd .grip, .ge .grip { margin-left: 2px; }
.gb .grip, .gc .grip { margin-right: -1px; }
.ha { width: 296px; } .ha .grip { margin-right: -2px; } .hb { width: 69px; } .hc { width: 307px; } .hd { width: 37px; } .he { width: 38px; } .hf { flex: 1; }
.hb .ic:nth-child(2) { width: 25px; } .hb .ic.on { margin-left: 4px; }
.hc .grip { margin-right: -2px; } .hc .ic { width: 30px; } .hc .combo { margin-left: 2px; }
.hd .grip, .he .grip { margin-left: 3px; } .hd .ic, .he .ic { width: 27px; }
.hf .grip { margin-left: 3px; }
.ha label { width: 65px; padding-left: 1px; }
.combo { height: 21px; background: #fff; border: 1px solid #999; border-radius: 5px; display: flex; align-items: center; padding-left: 2px; position: relative; flex: none; white-space: nowrap; overflow: hidden; box-shadow: 0 1px 1px #8888; }
.combo i { margin-left: auto; width: 16px; height: 21px; background: linear-gradient(#d80000, #8e0000); display: flex; align-items: center; justify-content: center; flex: none; }
.combo i::before { content: ""; border: 4px solid transparent; border-top: 5px solid #fff; border-bottom: 0; }
.combo.grey { background: linear-gradient(#fff, #e0e0e0); padding-left: 1px; }
.c78 { width: 79px; } .c68 { width: 68px; } .c118 { width: 118px; } .c144 { width: 144px; } .c79 { width: 79px; } .c67 { width: 67px; }
.num { padding-left: 13px; }
.field { width: 120px; height: 21px; border: 1px solid #999; border-bottom-color: #eee; border-radius: 4px; background: #d9d9d9; color: #8a8a8a; line-height: 20px; padding-left: 4px; }

.body { display: flex; flex: 1; min-height: 0; }
.dock { width: 272px; flex: none; display: flex; flex-direction: column; }
.dockhead { height: 19px; border: 1px solid #777; border-bottom: 1px solid #555; background: linear-gradient(#e4e4e4, #bcbcbc); display: flex; align-items: center; gap: 1px; padding: 0 0 0 12px; color: #111; flex: none; }
.dockhead b { flex: 1; font-size: 10.8px; }
.dockhead span { width: 14px; height: 14px; border: 1px solid #888; border-radius: 3px; background: #e0e0e0; font: bold 10px/12px "DejaVu Sans", sans-serif; display: flex; align-items: center; justify-content: center; }
.dockhead svg { width: 9px; height: 9px; }
.strip { display: flex; align-items: center; background: linear-gradient(#ebebeb, #b8b8b8); border-bottom: 1px solid #888; border-right: 1px solid #999; border-radius: 0 0 4px 0; flex: none; }
.s1 { height: 28px; padding-top: 1px; }
.s1 .ic { width: 30.500px; }
.s1 .vsep { margin: 0 16px 0 3px; }
.vsep { width: 1px; height: 16px; background: #777; }
.more { font: bold 15px "DejaVu Sans", sans-serif; color: #111; }
.s2 { height: 28px; margin-top: 7px; } .s2 .vsep { margin: 0 1px; } .s2 .ic:first-child { margin-right: 1px; width: 30px; }
.pathrow { display: flex; gap: 7px; margin-top: 6px; height: 23px; flex: none; }
.path { width: 239px; padding: 0; height: 22px; }
.path em { width: 222px; overflow: hidden; letter-spacing: .12px; display: flex; justify-content: flex-end; padding-right: 3px; }
.path i { margin-left: 0; height: 22px; }
.fbtn { width: 25px; height: 22px; border: 1px solid #999; border-radius: 7px; background: #dedede; display: flex; align-items: center; justify-content: center; }
.fbtn svg { width: 15px; height: 14px; }
.tree { margin: 5px 0 0 1px; height: 309px; border: 1px solid #222; border-top-width: 2px; border-bottom: 0; background: #fff; display: flex; flex: none; width: 270px; }
.rows { flex: 1; min-width: 0; margin-top: -1px; }
.row { height: 18px; display: flex; align-items: center; padding-left: 6px; white-space: nowrap; letter-spacing: -.06px; background: linear-gradient(#888, #888) 10px 0 / 1px 100% no-repeat; }
.row .pm { width: 9px; height: 9px; border: 1px solid #333; background: #fff; position: relative; margin-right: 10px; flex: none; }
.row .pm::before { content: ""; position: absolute; left: 1px; top: 3px; width: 5px; height: 1px; background: #000; }
.row .pm::after { content: ""; position: absolute; left: 3px; top: 1px; width: 1px; height: 5px; background: #000; }
.row svg { width: 12px; height: 13px; margin-right: 8px; flex: none; }
.row.sel { background: #808080; color: #e4f0ee; } .row.sel .pm { background: #777; }
.sbar { width: 16px; background: #8c8c8c; display: flex; flex-direction: column; position: relative; }
.sb { height: 15px; background: #dcdcdc; border-bottom: 1px solid #555; display: flex; align-items: center; justify-content: center; }
.sb::before { content: ""; border: 5px solid transparent; }
.sb.up::before { border-bottom: 8px solid #f8f8f8; border-top: 0; filter: drop-shadow(0 0 1px #777); }
.sb.dn::before { border-top: 8px solid #f8f8f8; border-bottom: 0; filter: drop-shadow(0 0 1px #777); }
.track { height: 17px; }
.thumb { flex: 1; border-radius: 8px; background: repeating-linear-gradient(#666 0 1px, #ddd 1px 2px) center / 6px 9px no-repeat, linear-gradient(90deg, #c8c8c8, #b2b2b2); border: 1px solid #999; border-bottom-color: #555; margin-bottom: 2px; }
.split { height: 6px; margin-top: 1px; border-top: 2px solid #fff; border-bottom: 2px solid #c9c9c9; flex: none; }
.tabs { display: flex; flex: none; }
.tabs span { padding: 0 7px; border: 1px solid #aaa; background: #cdcdcd; height: 22px; line-height: 20px; }
.tabs .cur { background: #f1f1f1; border-color: #eee #aaa #eee #fff; }
.top { padding-left: 1px; height: 23px; }
.top .cur { width: 51px; padding: 0 6px; } .top span:last-child { width: 50px; padding: 0 6px; line-height: 23px; }
.signals { margin: 1px 0 0 2px; height: 350px; background: #fff; border: 2px solid #111; border-right: 1px solid #111; border-bottom: 1px solid #111; padding: 0 0 0 4px; flex: none; }
.sig { height: 18px; display: flex; align-items: center; position: relative; top: -1px; }
.sig svg { width: 14px; height: 12px; margin-right: 7px; }
.filter { margin-top: 8px; height: 28px; display: flex; align-items: center; background: linear-gradient(#ececec, #b8b8b8); border-bottom: 1px solid #888; padding: 0 0 2px 5px; flex: none; }
.fun { width: 20px; height: 20px; } .filter .tri { width: 17px; }
.filter .c67 { margin-left: 1px; }
.chk { width: 12px; height: 12px; background: #f4f4f4; border: 1px solid #999; border-radius: 2px; margin: 0 5px 0 2px; }
.mc { letter-spacing: .05px; }
.bottom { border-top: 2px solid #111; height: 23px; }
.bottom span { height: 21px; border-top: 0; line-height: 17px; } .bottom span:first-child { width: 69px; } .bottom span:last-child { width: 59px; line-height: 19px; border-bottom-color: #aaa; }

.work { flex: 1; min-width: 0; display: flex; flex-direction: column; border-left: 6px solid #d4d4da; }
.wtabs { height: 26px; display: flex; align-items: flex-end; border-left: 1px solid #fff; border-bottom: 2px solid #fff; padding-bottom: 1px; flex: none; }
.wtabs span { height: 22px; width: 115px; display: flex; align-items: center; padding: 3px 0 0 8px; background: #e4e4e4; border-right: 1px solid #bbb; }
.wtabs svg { width: 13px; height: 13px; margin-right: 6px; }
.wtabs em { margin-left: auto; margin-right: 11px; color: #c4c4c4; font-size: 11px; font-weight: bold; }
.wtabs .cur { background: #f2f2f2; border-top: 2px solid #d00000; width: 114px; padding-top: 0; } .wtabs .cur em { color: #999; }
.canvas { flex: 1; background: #000; position: relative; border-left: 2px solid #fff; overflow: hidden; }
.plot { display: block; font-family: "Noto Serif", "Droid Serif", "Liberation Serif", serif; font-size: 14.5px; }
.legend { position: absolute; left: 8px; top: 53px; width: 134px; color: #e8e8e8; }
.lhead { height: 20px; background: linear-gradient(#bdbdbd, #a6a6a6); color: #222; line-height: 18px; padding-left: 1px; }
.pill { width: 83px; height: 7px; border-radius: 4px; background: #fff; margin-top: 7px; }
.lfun { width: 26px; height: 18px; border: 1px solid #666; border-right-color: #444; margin: 5px 2px 0 auto; display: flex; align-items: center; justify-content: center; }
.lfun svg { width: 13px; height: 13px; }
.lrows { margin-left: 6px; border-left: 1px dotted #666; height: 325px; }
.lrow { height: 21px; display: flex; align-items: center; font: 14px "Noto Serif", "Droid Serif", "Liberation Serif", serif; white-space: nowrap; width: 126px; overflow: hidden; }
.lrow::before { content: ""; width: 5px; border-top: 1px dotted #666; margin-right: 3px; flex: none; }
.lrow i { width: 15px; height: 11px; margin-right: 10px; flex: none; }
.lrow span { transform: scaleX(.885); transform-origin: 0 50%; }

.mouse { height: 18px; background: linear-gradient(#e8e8e8, #b6b6b6); border-bottom: 1px solid #888; display: grid; grid-template-columns: 1fr auto 1fr; align-items: center; flex: none; margin-top: 1px; padding: 0 6px 0 3px; }
.mouse span:nth-child(2) { padding-left: 5px; }
.mouse span:last-child { text-align: right; }
.mouse i { display: inline-block; width: 6px; height: 7px; background: repeating-linear-gradient(90deg, #888 0 1px, #ddd 1px 2px); margin-right: 1px; }
.err { height: 21px; display: flex; align-items: center; border-top: 1px solid #fff; flex: none; background: #efefef; }
.code { width: 29px; height: 20px; background: #f7d7d9; border-right: 1px solid #444; color: #622; line-height: 20px; padding-left: 2px; }
.msg { padding-left: 9px; flex: 1; }
.err i { width: 9px; height: 16px; background: #a8a8ac; border: 1px solid #555; margin-right: 6px; }

.taskbar { margin-top: auto; height: 50px; background: linear-gradient(90deg, #333936, #3f4340 25%, #424242 40%, #434343 70%, #32302a 86%, #383b38 95%, #35362e); display: flex; color: #fff; font: 14.2px "Open Sans", sans-serif; flex: none; }
.start { width: 60px; display: flex; align-items: center; justify-content: center; } .start svg { width: 20px; height: 20px; }
.search { width: 360px; background: #323232; border: 1px solid #666; display: flex; align-items: center; padding-left: 14px; font-size: 17.400px; color: #dcdcdc; margin-right: 14px; }
.glass { width: 20px; height: 20px; margin-right: 15px; } .search span { flex: 1; white-space: nowrap; }
.gift { width: 95px; height: 48px; }
.ti { display: flex; align-items: center; flex: none; white-space: nowrap; overflow: hidden; }
.ti svg { flex: none; }
.tview { width: 62px; padding-left: 6px; } .tview svg { width: 20px; height: 20px; }
.store { width: 49px; } .store svg { width: 29px; height: 30px; }
.ti.app { height: 50px; margin: 0; background: none; flex-direction: row; border-bottom: 3px solid #b4b4b4; padding: 3px 0 0 5px; gap: 4px; }
.ti.app svg { width: 30px; height: 30px; }
.t1 { width: 126px; } .mail { width: 67px; padding-left: 18px; } .mail svg { width: 30px; height: 30px; }
.t2 { width: 126px; } .vlc { width: 67px; padding-left: 20px; } .vlc svg { width: 26px; height: 30px; }
.ti.t3 { width: 126px; margin-right: 11px; } .ti.t4 { width: 125px; margin-right: 11px; } .ti.t5 { width: 125px; margin-right: 6px; }
.ti.t6 { width: 130px; background: #6a6a68; padding-left: 10px; margin-right: 11px; } .t7 { width: 125px; }
.tray { display: flex; align-items: center; margin-left: 16px; flex: 1; }
.y1 { width: 16px; height: 10px; margin-right: 12px; } .y2 { width: 20px; height: 16px; margin-right: 13px; } .y3 { width: 16px; height: 16px; margin-right: 11px; } .y4 { width: 20px; height: 16px; margin-right: 15px; } .y5 { width: 20px; height: 20px; margin-right: 17px; }
.clock { width: 70px; font-size: 13.700px; display: flex; flex-direction: column; align-items: center; line-height: 23px; margin-right: 22px; letter-spacing: -.1px; }
.y6 { width: 32px; height: 32px; margin-top: 8px; }
```
FILE: app.js
```js
const NS = 'http://www.w3.org/2000/svg';
const $ = id => document.getElementById(id);

// Result directories
const dirs = ['...a/spectre/schematic/length=6e-08/psf', '...spectre/schematic/length=9.2e-08/psf',
  ...['1.24', '1.56', '1.88'].map(n => `...pectre/schematic/length=${n}e-07/psf`), '...spectre/schematic/length=2.2e-07/psf',
  ...['2.52', '2.84', '3.16', '3.48'].map(n => `...pectre/schematic/length=${n}e-07/psf`), '...spectre/schematic/length=3.8e-07/psf',
  ...['4.12', '4.44', '4.76', '5.08'].map(n => `...pectre/schematic/length=${n}e-07/psf`), '...spectre/schematic/length=5.4e-07/psf',
  '...ion/pmos_para/spectre/schematic/psf'];
$('tree').innerHTML = dirs.map((d, i) => `<div class="row${i === 16 ? ' sel' : ''}"><span class="pm"></span><svg viewBox="0 0 14 14"><use href="#${i < 14 ? 'orb' : i < 16 ? 'db' : 'dbok'}"/></svg>${d}</div>`).join('');

$('signals').innerHTML = ['dcOp', 'dcOpInfo', 'dc', 'model', 'instance', 'output', 'designParamVals', 'primitives', 'subckts', 'variables']
  .map(s => `<div class="sig"><svg viewBox="0 0 16 14"><use href="#folder"/></svg>${s}</div>`).join('');

const colors = ['#e00000', '#e0e000', '#00e000', '#00e0e0', '#0000e0', '#e000e0', '#80e000', '#0080e0', '#e00080', '#e08000', '#00e080', '#8000ff', '#80e080', '#8080e0', '#e08080', '#e0e080'];
const names = ['6…th" 6e', '9…" 9.2e', '1… 1.24', '1… 1.56', '1… 1.88', '2…" 2.2e', '2… 2.52', '2… 2.84', '3… 3.16', '3… 3.48', '3…" 3.8e', '4… 4.12', '4… 4.44', '4… 4.76', '5… 5.08', '5…" 5.4e'];
$('legend').innerHTML = names.map((n, i) => `<div class="lrow"><i style="background:${colors[i]}"></i><span>length:"${n}</span></div>`).join('');

// Plot scales
const X = v => 516.5 + (v - 2) * 42.74;
const Y = v => 247.5 + (1.3 - v) * 476.4;
const svg = $('plot');
function el(tag, attrs, text, parent = svg) {
  const e = document.createElementNS(NS, tag);
  for (const k in attrs) e.setAttribute(k, attrs[k]);
  if (text !== undefined) e.textContent = text;
  parent.appendChild(e);
  return e;
}
const px = n => Math.floor(n) + .5;
const crisp = 'crispEdges';
const fixed = (x, y, w, t, extra = {}) => el('text', { x, y, textLength: w, lengthAdjust: 'spacingAndGlyphs', fill: '#e6e6e6', ...extra }, t);

// Grid and axes
let grid = '', ticks = 'M485.5 238V929M496 930.5H1878';
for (let v = 2; v <= 33; v++) grid += `M${px(X(v))} 238V924`;
for (let i = -1; i <= 13; i++) grid += `M497 ${px(Y(i / 10))}H1878`;
for (let i = -13; i <= 131; i++) ticks += `M${i % 10 ? 481 : 477} ${px(Y(i / 100))}H486`;
for (let i = 16; i <= 339; i++) ticks += `M${px(X(i / 10))} 930V${i % 10 ? 935 : 939}`;
el('path', { d: grid, stroke: '#555', 'stroke-dasharray': '1 2', fill: 'none', 'shape-rendering': crisp });
el('path', { d: ticks, stroke: '#fff', fill: 'none', 'shape-rendering': crisp });
for (let v = 2; v <= 33; v++) { const w = v < 10 ? 18 : 25; fixed(X(v) - w / 2, 953, w, v.toFixed(1)); }
for (let i = -1; i <= 13; i++) { const w = i < 0 ? 22 : 17.5; fixed(472 - w, Y(i / 10) + 5.5, w, (i / 10).toFixed(1)); }
el('text', { transform: 'translate(444 588) rotate(-90)', fill: '#e6e6e6', textLength: 17 }, '(V)');
fixed(302.4, 170, 1587.5, 'length:"60n" leafValue((- v("M0:vgs" ?resultsDir "/home/users/mtech/vlsilab4/simulation/pmos_para/spectre/schematic" ?result "dc")) "...ue(getData("M0:gmoverid" ?resultsDir "/home/users/mtech/vlsilab4/simulation/pmos_para/spectre/schematic" ?result "dc") "length" 6e-08)');
fixed(1899, 170, 7, '3');
fixed(768, 970, 837, 'leafValue(getData("M0:gmoverid" ?resultsDir "/home/users/mtech/vlsilab4/simulation/pmos_para/spectre/schematic" ?result "dc") "length" 6e-08)');

// Monotone cubic through the sampled points
function spline(p) {
  const n = p.length, h = [], s = [], m = [];
  for (let i = 0; i < n - 1; i++) { h[i] = p[i + 1][0] - p[i][0]; s[i] = (p[i + 1][1] - p[i][1]) / h[i]; }
  m[0] = s[0] * 1.15; m[n - 1] = s[n - 2] * 1.4;
  for (let i = 1; i < n - 1; i++) m[i] = s[i - 1] * s[i] <= 0 ? 0 : 3 * (h[i - 1] + h[i]) / ((2 * h[i] + h[i - 1]) / s[i - 1] + (h[i] + 2 * h[i - 1]) / s[i]);
  let d = `M${p[0][0]} ${p[0][1]}`;
  for (let i = 0; i < n - 1; i++) {
    const t = h[i] / 3;
    d += `C${(p[i][0] + t).toFixed(2)} ${(p[i][1] + m[i] * t).toFixed(2)} ${(p[i + 1][0] - t).toFixed(2)} ${(p[i + 1][1] - m[i + 1] * t).toFixed(2)} ${p[i + 1][0]} ${p[i + 1][1]}`;
  }
  return d;
}
const values = [235.473, 311.834, 317.154, 315.294, 312.666, 310.283, 308.365, 306.807, 305.493, 304.38, 303.427, 302.604, 301.885, 301.253, 300.691, 300.189];
const red = [[497.3, 295.3], [506.7, 341.7], [519.3, 390.7], [535, 438.3], [558.5, 487], [577, 515], [602.7, 545.3], [645, 580.7], [688, 606], [730.3, 625.3], [773.3, 641.3], [816.3, 654.3], [858.3, 665.6], [901.3, 676.2], [944.3, 686.3], [987.3, 695.2], [1029.3, 704], [1072.3, 712.7], [1115.3, 722], [1183, 737], [1247, 755], [1305, 774], [1358, 795], [1414, 821], [1450, 843], [1474, 866.7]];
const rise = [[503, 509.7, 295.3], [514.8, 521.8, 342.5], [529.5, 536.2, 390.7], [549.5, 555.5, 438.5], [575.5, 578.5, 485.5], [605.5, 606.5, 521.7]];
const fall = [[645.5, 555, 559.3], [688, 580.7, 588], [730.3, 601, 610.5], [773.3, 616.8, 628.8], [816.3, 630.7, 643.2], [858.3, 642.3, 654.6], [901.3, 652.5, 665], [944.3, 661.8, 674.3], [987.3, 670.5, 682.8], [1029.3, 678.3, 690.3], [1072.3, 686, 697.3], [1115.3, 693.3, 704]];
const last = [[1310, 733.5, 6.5], [1363, 742, 5], [1414.6, 750.3, 3], [1457, 757, 2], [1499.6, 764, .8], [1542, 771.3, .5], [1585, 778.3, 0], [1628.5, 786, 0]];
const tails = {
  1: [[1310, 729.5], [1351, 741], [1414.6, 757.3], [1457, 769.3], [1499.6, 782.3], [1542, 796.7], [1585, 816.7], [1612, 834.3], [1632, 855], [1637.5, 866.7]],
  2: [[1457, 758], [1499.6, 767.3], [1542, 777.7], [1585, 789.3], [1628.5, 803.3], [1671, 821.7], [1699, 840], [1713, 855], [1718.6, 866.7]],
  3: [[1499.6, 764], [1542, 772.6], [1585, 782.3], [1628.5, 792.3], [1671, 805.3], [1713.5, 820.7], [1746.6, 839], [1761.6, 855], [1768, 866.7]],
  4: [[1585, 779], [1628.5, 789], [1671, 798.7], [1713.5, 811], [1756, 828.3], [1782, 843.3], [1795, 856.7], [1801.6, 866.7]],
  5: [[1628.5, 786.7], [1671, 795.7], [1713.5, 806], [1756, 819.7], [1799, 839], [1814, 851.7], [1825, 866.7]]
};
const ends = [1840, 1848, 1854.5, 1859, 1863.6, 1867, 1869.6, 1872, 1874, 1876.3];
const lime = [[1671, 1674, 794], [1713, 1721, 803], [1756, 1770, 815], [1799, 1824, 833], [1826, 1855, 849], [1840, 1876.3, 866.7]];
const paths = [spline(red)];
for (let c = 1; c < 16; c++) {
  const f = (c - 1) / 14, g = (317.154 - values[c]) / 16.965, ge = c === 1 ? .03 : g;
  const p = rise.map(([a, b, y]) => [a + (b - a) * f, y]);
  fall.forEach(([x, a, b]) => p.push([x, a + (b - a) * ge]));
  p.push([1247, Y(values[c] / 1000)]);
  const tail = tails[c] || lime.map(([a, b, y]) => [a + (b - a) * (ends[c - 6] - 1840) / 36.3, y]);
  last.forEach(([x, y, t]) => { if (x < tail[0][0]) p.push([x, y - t * (1 - g)]); });
  paths.push(spline(p.concat(tail)));
}
paths.forEach((d, i) => el('path', { d, stroke: colors[i], fill: 'none', 'shape-rendering': crisp }));

// Range slider above the plot
el('rect', { x: 497, y: 181, width: 13, height: 24, fill: 'url(#gBar)' });
el('rect', { x: 1862, y: 181, width: 14, height: 24, fill: 'url(#gBar)', stroke: '#555' });
el('path', { d: 'M506 189V195L500 192ZM1867 189V195L1873 192Z', fill: '#d80000' });
el('rect', { x: 509, y: 178, width: 1355, height: 30, rx: 5, fill: 'url(#gFrame)' });
el('rect', { x: 521.5, y: 181, width: 1330, height: 24, rx: 3, fill: 'url(#gBar)' });
el('path', { d: 'M514.500 186V200M517.500 186V200M1856.500 186V200M1859.500 186V200', stroke: '#222' });
const mini = el('g', { transform: 'matrix(.96 0 0 .0341 47 172.900)' });
paths.forEach((d, i) => el('path', { d, stroke: colors[i], fill: 'none', 'vector-effect': 'non-scaling-stroke', 'stroke-width': 1.3 }, undefined, mini));
el('path', { d: 'M1244 181V205', stroke: '#fff', 'stroke-width': 2 });

// Vertical marker and its readouts
el('path', { d: 'M1247.500 233V930', stroke: '#fff', 'stroke-width': 3, 'stroke-dasharray': '15 3' });
el('rect', { x: 1248, y: 215, width: 21, height: 17.5, rx: 3, fill: '#fff' });
fixed(1251, 229, 15, 'V1', { fill: '#000' });
el('rect', { x: 1192.5, y: 910.5, width: 52, height: 19, rx: 5, fill: '#000', stroke: '#555' });
fixed(1196, 925, 46, '19.0839');

function readout(x, y, i, wedge) {
  const short = i === 9, dx = short ? 7 : 0;
  const oy = i ? Y(values[i] / 1000) : 755;
  el('path', { d: `M${wedge[0]} ${wedge[2]}L1247 ${oy}L${wedge[1]} ${wedge[2 + (wedge.length > 3)]}`, fill: 'rgba(0,0,0,.45)', stroke: '#666' });
  el('rect', { x: x + dx + .5, y: y + .5, width: 89 - dx, height: 18, rx: 6, fill: 'rgba(0,0,0,.5)', stroke: '#5c5c5c' });
  el('circle', { cx: x + dx + 9.500, cy: y + 9.5, r: 4.6, fill: colors[i] });
  fixed(x + dx + 18.5, y + 14, 66 - dx, values[i] + 'mV');
}
readout(1132, 652, 4, [1198, 1215, 671]);
readout(1132, 673, 5, [1198, 1217, 692]);
readout(1132, 694, 7, [1217, 1217, 706, 712]);
readout(1132, 715, 9, [1217, 1217, 720, 732]);
readout(1132, 778, 15, [1172, 1184, 778]);
readout(1132, 757, 13, [1199, 1216, 757]);
readout(1132, 736, 11, [1200, 1216, 736]);
readout(1272, 799, 0, [1278, 1296, 799]);
readout(1272, 673, 1, [1278, 1296, 692]);
readout(1272, 652, 3, [1278, 1295, 671]);
readout(1272, 631, 2, [1310, 1322, 650]);
readout(1272, 694, 6, [1278, 1296, 713]);
readout(1272, 715, 8, [1276, 1276, 719, 729]);
readout(1272, 778, 14, [1310, 1322, 778]);
readout(1272, 757, 12, [1278, 1296, 757]);
readout(1272, 736, 10, [1278, 1294, 736]);

// Pane separator and the active-window frame
el('path', { d: 'M428.500 177V974', stroke: '#484848', 'stroke-width': 2 });
el('rect', { x: 290, y: 149, width: 1618, height: 829, fill: 'none', stroke: '#e01c3c', 'stroke-width': 2, 'stroke-dasharray': '4 2' });
el('path', { d: 'M286 980.500H1911.500V146', fill: 'none', stroke: '#666' });
```
